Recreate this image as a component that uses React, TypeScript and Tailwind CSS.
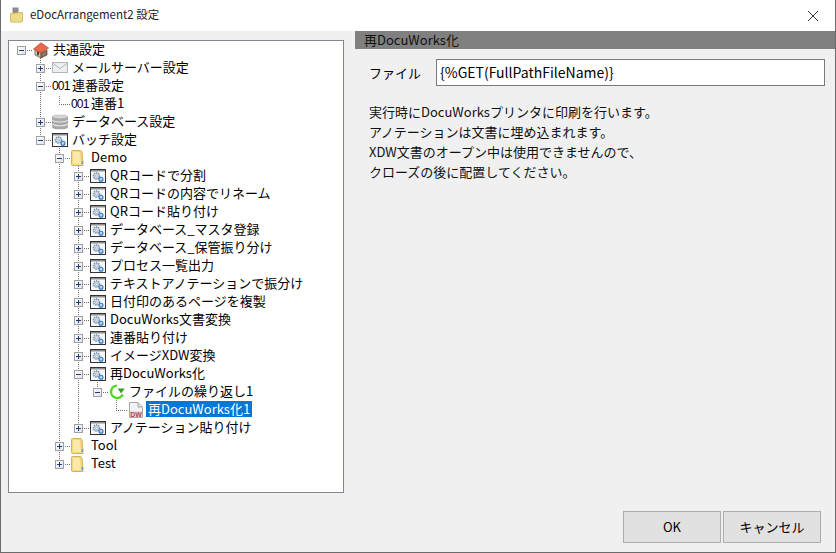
type Kind = "house" | "mail" | "num" | "db" | "batch" | "folder" | "loop" | "doc";

type Node = {
  depth: number;
  label: string;
  kind: Kind;
  open?: boolean;
  leaf?: boolean;
  selected?: boolean;
};

const nodes: Node[] = [
  { depth: 0, label: "共通設定", kind: "house", open: true },
  { depth: 1, label: "メールサーバー設定", kind: "mail" },
  { depth: 1, label: "連番設定", kind: "num", open: true },
  { depth: 2, label: "連番1", kind: "num", leaf: true },
  { depth: 1, label: "データベース設定", kind: "db" },
  { depth: 1, label: "バッチ設定", kind: "batch", open: true },
  { depth: 2, label: "Demo", kind: "folder", open: true },
  { depth: 3, label: "QRコードで分割", kind: "batch" },
  { depth: 3, label: "QRコードの内容でリネーム", kind: "batch" },
  { depth: 3, label: "QRコード貼り付け", kind: "batch" },
  { depth: 3, label: "データベース_マスタ登録", kind: "batch" },
  { depth: 3, label: "データベース_保管振り分け", kind: "batch" },
  { depth: 3, label: "プロセス一覧出力", kind: "batch" },
  { depth: 3, label: "テキストアノテーションで振分け", kind: "batch" },
  { depth: 3, label: "日付印のあるページを複製", kind: "batch" },
  { depth: 3, label: "DocuWorks文書変換", kind: "batch" },
  { depth: 3, label: "連番貼り付け", kind: "batch" },
  { depth: 3, label: "イメージXDW変換", kind: "batch" },
  { depth: 3, label: "再DocuWorks化", kind: "batch", open: true },
  { depth: 4, label: "ファイルの繰り返し1", kind: "loop", open: true },
  { depth: 5, label: "再DocuWorks化1", kind: "doc", leaf: true, selected: true },
  { depth: 3, label: "アノテーション貼り付け", kind: "batch" },
  { depth: 2, label: "Tool", kind: "folder" },
  { depth: 2, label: "Test", kind: "folder" },
];

// x of the expander column for a depth, inside the tree panel
const colX = (depth: number) => 12 + depth * 19;
const rowY = (i: number) => i * 18 + 9;

// dotted verticals: [depth, first row, last row]
const verticals: [number, number, number][] = [
  [1, 0, 5],
  [2, 2, 3],
  [2, 5, 23],
  [3, 6, 21],
  [4, 18, 19],
  [5, 19, 20],
];

function Connectors() {
  // half-pixel offset on the cross axis keeps the 1px dots crisp
  return (
    <svg className="absolute left-0 top-0" width="330" height="450" stroke="#707070" strokeWidth="1" strokeDasharray="1 1" fill="none">
      {verticals.map(([d, a, b], i) => (
        <line key={i} x1={colX(d) + 0.5} x2={colX(d) + 0.5} y1={rowY(a)} y2={rowY(b)} />
      ))}
      {nodes.map((n, i) => (
        <line key={i} x1={colX(n.depth)} x2={colX(n.depth) + 11} y1={rowY(i) + 0.5} y2={rowY(i) + 0.5} />
      ))}
    </svg>
  );
}

function Expander({ open }: { open?: boolean }) {
  return (
    <span className="relative flex h-[9px] w-[9px] items-center justify-center border border-[#a0a0a0] bg-gradient-to-br from-white to-[#dfe3e8]">
      <span className="h-px w-[5px] bg-[#1f3a7a]" />
      {!open && <span className="absolute h-[5px] w-px bg-[#1f3a7a]" />}
    </span>
  );
}

function BatchIcon() {
  return (
    <svg width="16" height="16" viewBox="0 0 16 16">
      <rect x="0.5" y="1.5" width="15" height="13" fill="#f7f8f9" stroke="#333" />
      <rect x="1" y="2" width="14" height="1.5" fill="#8d8d8d" />
      <circle cx="6.5" cy="8" r="3" fill="#dfe6ee" stroke="#6f8fb0" strokeWidth="1.6" strokeDasharray="1.4 0.8" />
      <circle cx="6.5" cy="8" r="1.1" fill="#fff" stroke="#8a97a6" strokeWidth="0.6" />
      <circle cx="11" cy="11.2" r="2" fill="#b9d4ee" stroke="#2f78c4" strokeWidth="1.1" />
    </svg>
  );
}

function HouseIcon() {
  return (
    <svg width="16" height="16" viewBox="0 0 16 16">
      <path d="M2 8 L8 11 L8 16 L2 13 Z" fill="#d9c7a8" stroke="#5a4a38" strokeWidth="0.7" />
      <path d="M8 11 L14 8 L14 13 L8 16 Z" fill="#8a7660" stroke="#4f4234" strokeWidth="0.7" />
      <path d="M0.5 7 L8 0.8 L15.5 6 L8 11 Z" fill="#ea6a50" stroke="#b5402c" strokeWidth="0.7" />
      <rect x="4" y="10" width="2" height="3.4" fill="#4f4234" />
    </svg>
  );
}

function MailIcon() {
  return (
    <svg width="16" height="16" viewBox="0 0 16 16">
      <rect x="0.5" y="2.5" width="15" height="10" fill="#eceef0" stroke="#b2b7bc" />
      <path d="M1 3.5 L8 8.5 L15 3.5" fill="none" stroke="#b2b7bc" />
    </svg>
  );
}

function DbIcon() {
  return (
    <svg width="16" height="16" viewBox="0 0 16 16">
      <path d="M0.5 2.8 C0.5 0.6 15.5 0.6 15.5 2.8 V13.2 C15.5 15.4 0.5 15.4 0.5 13.2 Z" fill="#a9a9a9" stroke="#8a8a8a" strokeWidth="0.6" />
      <ellipse cx="8" cy="2.8" rx="7" ry="1.7" fill="#d5d5d5" />
      <path d="M0.5 6.2 C3 8.6 13 8.6 15.5 6.2 M0.5 10 C3 12.4 13 12.4 15.5 10" fill="none" stroke="#e8e8e8" strokeWidth="1.1" />
    </svg>
  );
}

function FolderIcon() {
  return (
    <svg width="14" height="16" viewBox="1 0 14 16">
      <path d="M1.5 1.5 Q1.5 0.5 2.5 0.5 H10 Q11.5 0.5 12 2 L13 13 V15.5 H2.5 Q1.5 15.5 1.5 14.5 Z" fill="#f3d77f" stroke="#d4b35e" />
      <path d="M3 2 H9.5 L11 14 H3 Z" fill="#fae9a8" />
      <rect x="11.5" y="11" width="1.5" height="3" fill="#5a9bd5" />
    </svg>
  );
}

function LoopIcon() {
  return (
    <svg width="16" height="16" viewBox="0 0 16 16" fill="none">
      <path d="M8 1.6 A6.2 6.2 0 1 0 13.8 10.6" stroke="#4fd81e" strokeWidth="2.4" />
      <path d="M8.6 4.6 H15.8 L12.2 9.6 Z" fill="#3c9e24" />
    </svg>
  );
}

function DocIcon() {
  return (
    <svg width="16" height="16" viewBox="0 0 16 16">
      <path d="M1.5 0.5 H10 L14.5 5 V15.5 H1.5 Z" fill="#f3f1f1" stroke="#a8a8a8" />
      <path d="M10 0.5 V5 H14.5" fill="#dcdcdc" stroke="#a8a8a8" />
      <rect x="2" y="9" width="12" height="6" fill="#eadede" />
      <text x="8" y="14.6" textAnchor="middle" fontSize="7" fontWeight="700" fill="#b04848" fontFamily="Liberation Sans, sans-serif">DW</text>
    </svg>
  );
}

function NodeIcon({ kind }: { kind: Kind }) {
  if (kind === "house") return <HouseIcon />;
  if (kind === "mail") return <MailIcon />;
  if (kind === "db") return <DbIcon />;
  if (kind === "batch") return <BatchIcon />;
  if (kind === "folder") return <FolderIcon />;
  if (kind === "loop") return <LoopIcon />;
  if (kind === "doc") return <DocIcon />;
  return <span className="font-['Liberation_Sans',sans-serif] text-[12px] tracking-[-0.8px] text-black">001</span>;
}

const indentClass = ["pl-[8px]", "pl-[27px]", "pl-[46px]", "pl-[65px]", "pl-[84px]", "pl-[103px]"];

function TreeRow({ node }: { node: Node }) {
  return (
    <div className={`relative flex h-[18px] items-center ${indentClass[node.depth]}`}>
      <span className="flex w-[9px] shrink-0 justify-center">{!node.leaf && <Expander open={node.open} />}</span>
      <span className="ml-[7px] flex w-[16px] shrink-0 justify-start bg-white">
        <NodeIcon kind={node.kind} />
      </span>
      <span
        className={`ml-[2px] h-[16px] self-start whitespace-nowrap px-[2px] text-[13px] leading-[16px] ${
          node.selected ? "bg-[#0078d7] text-white" : "text-black"
        }`}
      >
        {node.label}
      </span>
    </div>
  );
}

export default function App() {
  return (
    <div className="flex h-[553px] w-[836px] flex-col overflow-hidden border border-t-0 border-[#6b6b6b] bg-[#f0f0f0] font-['Noto_Sans_CJK_JP','Liberation_Sans',sans-serif] text-[13px] text-black">
      {/* Title bar */}
      <div className="flex h-[31px] shrink-0 items-center bg-white pb-[2px] pl-[8px] pr-[16px]">
        <svg width="16" height="16" viewBox="0 0 16 16">
          <rect x="3.5" y="0.5" width="6" height="7" fill="#8a8a8a" />
          <path d="M1.5 6.5 L13.5 5.5 V14 Q13.5 15 12.5 15 H2.5 Q1.5 15 1.5 14 Z" fill="#eedd86" stroke="#d2bb62" />
        </svg>
        <span className="ml-[5px] text-[11.5px] text-[#222]">eDocArrangement2 設定</span>
        <svg className="ml-auto mt-[2px]" width="12" height="12" viewBox="0 0 12 12" stroke="#333" strokeWidth="1">
          <path d="M1 1 L11 11 M11 1 L1 11" />
        </svg>
      </div>

      {/* Body */}
      <div className="flex min-h-0 flex-1 gap-[11px] pl-[7px]">
        {/* Tree */}
        <div className="relative mb-[59px] mt-[9px] w-[336px] shrink-0 border border-[#828790] bg-white">
          <Connectors />
          {nodes.map((n) => (
            <TreeRow key={n.label} node={n} />
          ))}
        </div>

        {/* Settings panel */}
        <div className="flex min-w-0 flex-1 flex-col">
          <div className="h-[18px] bg-[#808080] pl-[9px] text-[13px] leading-[18px] text-[#111]">再DocuWorks化</div>
          <div className="mt-[10px] flex items-center pr-[10px]">
            <span className="ml-[14px] w-[67px] text-[13px]">ファイル</span>
            <div className="flex h-[27px] flex-1 items-center border border-[#7a7a7a] bg-white pl-[3px] text-[14px]">
              {"{%GET(FullPathFileName)}"}
            </div>
          </div>
          <div className="ml-[14px] mt-[16px] text-[13px] leading-[20px] text-[#111]">
            <p>実行時にDocuWorksプリンタに印刷を行います。</p>
            <p>アノテーションは文書に埋め込まれます。</p>
            <p>XDW文書のオープン中は使用できませんので、</p>
            <p>クローズの後に配置してください。</p>
          </div>
          <div className="mb-[9px] mr-[14px] mt-auto flex justify-end gap-[2px]">
            <button className="h-[32px] w-[98px] border border-[#adadad] bg-[#e1e1e1] text-[13px]">OK</button>
            <button className="h-[32px] w-[98px] border border-[#adadad] bg-[#e1e1e1] text-[13px]">キャンセル</button>
          </div>
        </div>
      </div>
    </div>
  );
}
